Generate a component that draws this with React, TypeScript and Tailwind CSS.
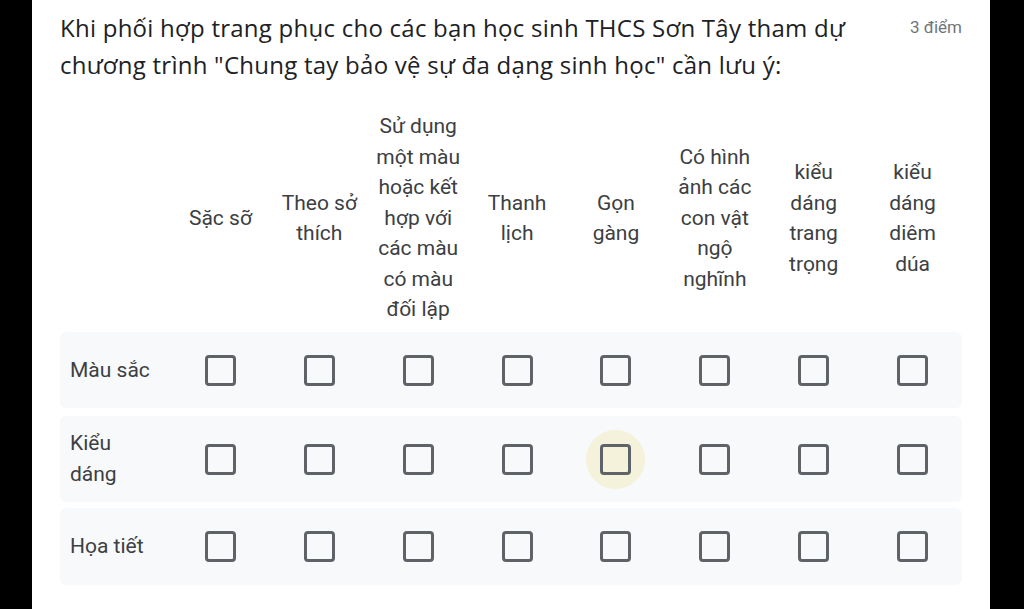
import React from 'react';

const columns: string[][] = [
    ['Sặc sỡ'],
    ['Theo sở', 'thích'],
    ['Sử dụng', 'một màu', 'hoặc kết', 'hợp với', 'các màu', 'có màu', 'đối lập'],
    ['Thanh', 'lịch'],
    ['Gọn', 'gàng'],
    ['Có hình', 'ảnh các', 'con vật', 'ngộ', 'nghĩnh'],
    ['kiểu', 'dáng', 'trang', 'trọng'],
    ['kiểu', 'dáng', 'diêm', 'dúa'],
];

const rows = [
    { label: ['Màu sắc'], cls: 'mt-[7px] h-[76px]' },
    { label: ['Kiểu', 'dáng'], cls: 'mt-[8px] h-[86px]' },
    { label: ['Họa tiết'], cls: 'mt-[6px] h-[77px]' },
];

function Lines({ lines }: { lines: string[] }) {
    return (
        <>
            {lines.map((l, i) => (
                <React.Fragment key={i}>
                    {i > 0 && <br />}
                    {l}
                </React.Fragment>
            ))}
        </>
    );
}

function Checkbox({ focused }: { focused?: boolean }) {
    return (
        <div className="relative flex items-center justify-center w-[59px] h-[59px]">
            {focused && <div className="absolute inset-0 rounded-full bg-[#f4f2da]"></div>}
            <div className="relative w-[31px] h-[31px] rounded-[4px] border-[3px] border-[#5f6368]"></div>
        </div>
    );
}

export default function App() {
    return (
        <div className="w-[1024px] h-[609px] bg-black flex overflow-hidden font-['Roboto',sans-serif]">
            <div className="ml-[32px] w-[958px] h-full bg-white pl-[28px] pr-[28px]">
                <div className="flex justify-between pt-[9px]">
                    <div className="font-['Open_Sans',sans-serif] text-[24px] tracking-[0.25px] leading-[37px] text-[#202124]">
                        Khi phối hợp trang phục cho các bạn học sinh THCS Sơn Tây tham dự<br />
                        chương trình "Chung tay bảo vệ sự đa dạng sinh học" cần lưu ý:
                    </div>
                    <div className="text-[17px] leading-[37px] text-[#70757a] whitespace-nowrap">3 điểm</div>
                </div>

                <div className="mt-[28px] grid grid-cols-[111px_repeat(8,1fr)] items-center h-[214px] text-[21px] leading-[30.5px] text-[#3c4043]">
                    <div></div>
                    {columns.map((c, i) => (
                        <div key={i} className="text-center">
                            <Lines lines={c} />
                        </div>
                    ))}
                </div>

                {rows.map((r, ri) => (
                    <div key={ri} className={`grid grid-cols-[111px_repeat(8,1fr)] items-center bg-[#f8f9fa] rounded-md ${r.cls}`}>
                        <div className="pl-[10px] text-[21px] leading-[31px] text-[#3c4043]">
                            <Lines lines={r.label} />
                        </div>
                        {columns.map((_, ci) => (
                            <div key={ci} className="flex justify-center">
                                <Checkbox focused={ri === 1 && ci === 4} />
                            </div>
                        ))}
                    </div>
                ))}
            </div>
        </div>
    );
}
